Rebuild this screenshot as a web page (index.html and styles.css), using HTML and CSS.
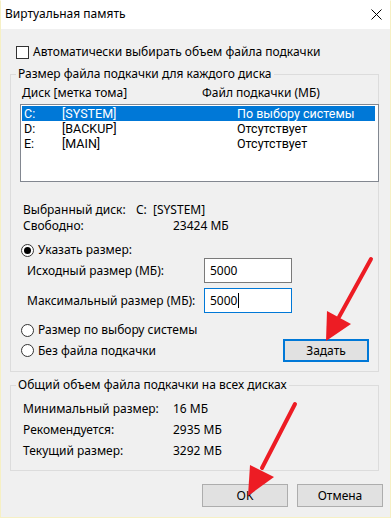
FILE: index.html
```html
<!DOCTYPE html>
<html lang="ru">
<head>
    <meta name="viewport" content="width=device-width, initial-scale=1.0">
    <link rel="stylesheet" href="styles.css">
    <title>Виртуальная память</title>
</head>

<body>
    <div class="window">

        <div class="titlebar">
            <span class="title">Виртуальная память</span>
            <svg class="close" width="11" height="11" viewBox="0 0 11 11">
                <path d="M0.5 0.5 L10.5 10.5 M10.5 0.5 L0.5 10.5" stroke="#000" stroke-width="1" fill="none"/>
            </svg>
        </div>

        <div class="dialog">
            <div class="check"><span class="box"></span>Автоматически выбирать объем файла подкачки</div>

            <fieldset class="group disks">
                <legend>Размер файла подкачки для каждого диска</legend>
                <div class="cols">
                    <span class="col-disk">Диск [метка тома]</span>
                    <span>Файл подкачки (МБ)</span>
                </div>
                <div class="listbox">
                    <div class="row selected"><span class="drv">C:</span><span class="lbl">[SYSTEM]</span><span>По выбору системы</span></div>
                    <div class="row"><span class="drv">D:</span><span class="lbl">[BACKUP]</span><span>Отсутствует</span></div>
                    <div class="row"><span class="drv">E:</span><span class="lbl">[MAIN]</span><span>Отсутствует</span></div>
                </div>

                <div class="info first"><span class="key">Выбранный диск:</span><span>C:&nbsp;&nbsp;[SYSTEM]</span></div>
                <div class="info"><span class="key">Свободно:</span><span class="free">23424 МБ</span></div>

                <div class="radio on custom"><span class="dot"></span>Указать размер:</div>
                <div class="size-row"><span class="size-label">Исходный размер (МБ):</span><div class="field">5000</div></div>
                <div class="size-row second"><span class="size-label">Максимальный размер (МБ):</span><div class="field focused">5000<span class="caret"></span></div></div>
                <div class="radio system"><span class="dot"></span>Размер по выбору системы</div>
                <div class="last-row">
                    <div class="radio"><span class="dot"></span>Без файла подкачки</div>
                    <div class="button default">Задать</div>
                </div>
            </fieldset>

            <fieldset class="group totals">
                <legend>Общий объем файла подкачки на всех дисках</legend>
                <div class="total first"><span class="tkey">Минимальный размер:</span><span>16 МБ</span></div>
                <div class="total"><span class="tkey">Рекомендуется:</span><span>2935 МБ</span></div>
                <div class="total"><span class="tkey">Текущий размер:</span><span>3292 МБ</span></div>
            </fieldset>

            <div class="buttons">
                <div class="button">OK</div>
                <div class="button">Отмена</div>
            </div>
        </div>

        <!-- red pointers drawn over the dialog -->
        <svg class="arrows" width="391" height="518" viewBox="0 0 391 518">
            <g stroke="#ed1c24" stroke-width="4" stroke-linecap="round" fill="none">
                <path d="M371 259 L339 317"/>
                <path d="M295 404 L262 468"/>
            </g>
            <g fill="#ed1c24">
                <polygon points="326,341 327,311 351,324"/>
                <polygon points="248,496 250,465 274,477"/>
            </g>
        </svg>
    </div>
</body>
</html>
```

FILE: styles.css
```css
html, body {
    margin: 0px;
    padding: 0px;
}

body {
    width: 391px;
    height: 518px;
    font-family: "Noto Sans", "Open Sans", sans-serif;
    font-size: 12px;
    line-height: 16px;
    color: #000;
}

.window {
    position: relative;
    box-sizing: border-box;
    width: 391px;
    height: 518px;
    border: 1px solid #f6f0c4;
    border-top-color: #ffffff;
    background-color: #f0f0f0;
}

.titlebar {
    display: flex;
    align-items: center;
    justify-content: space-between;
    height: 28px;
    padding: 0px 8px 0px 4px;
    background-color: #ffffff;
}

.title {
    font-size: 12px;
    margin-top: -2px;
}

.close {
    margin-top: -2px;
}

.dialog {
    display: flex;
    flex-direction: column;
}

/* checkbox */
.check {
    display: flex;
    align-items: center;
    margin: 15px 0px 0px 15px;
    height: 16px;
}

.box {
    box-sizing: border-box;
    width: 13px;
    height: 13px;
    border: 1px solid #333;
    background-color: #fff;
    margin-right: 4px;
}

/* group boxes */
.group {
    box-sizing: border-box;
    width: 369px;
    margin: 6px 0px 0px 9px;
    padding: 0px 0px 9px 5px;
    border: 1px solid #dcdcdc;
    min-inline-size: 0px;
}

.group legend {
    padding: 0px 2px;
    line-height: 16px;
}

.cols {
    display: flex;
    margin: 3px 0px 0px 6px;
}

.col-disk {
    width: 180px;
}

.listbox {
    box-sizing: border-box;
    height: 78px;
    margin: 3px -1px 0px 4px;
    padding: 1px;
    border: 1px solid #828790;
    background-color: #fff;
    font-family: Roboto, "Noto Sans", sans-serif;
    font-size: 12.5px;
}

.row {
    display: flex;
    align-items: center;
    height: 15px;
    line-height: 14px;
    padding-left: 2px;
}

.row.selected {
    background-color: #0078d7;
    color: #fff;
    margin-right: 2px;
}

.drv {
    width: 38px;
}

.lbl {
    width: 175px;
}

.info {
    display: flex;
    margin-left: 7px;
}

.info.first {
    margin-top: 20px;
}

.key {
    width: 113px;
}

.free {
    padding-left: 37px;
}

/* radio buttons */
.radio {
    display: flex;
    align-items: center;
    height: 16px;
    margin-left: 5px;
}

.radio.custom {
    margin-top: 8px;
}

.radio.system {
    margin-top: 9px;
}

.dot {
    box-sizing: border-box;
    width: 13px;
    height: 13px;
    border: 1px solid #333;
    border-radius: 50%;
    background-color: #fff;
    margin-right: 4px;
    display: flex;
    align-items: center;
    justify-content: center;
}

.radio.on .dot::after {
    content: "";
    width: 7px;
    height: 7px;
    border-radius: 50%;
    background-color: #000;
}

/* size fields */
.size-row {
    display: flex;
    align-items: center;
    height: 25px;
}

.size-row.second {
    margin-top: 5px;
}

.size-label {
    width: 177px;
    margin-left: 11px;
}

.field {
    box-sizing: border-box;
    display: flex;
    align-items: center;
    width: 88px;
    height: 25px;
    padding-left: 5px;
    border: 1px solid #7a7a7a;
    background-color: #fff;
}

.field.focused {
    border-color: #0078d7;
}

.caret {
    width: 1px;
    height: 15px;
    margin-left: 1px;
    background-color: #000;
}

.last-row {
    display: flex;
    align-items: center;
    justify-content: space-between;
    margin: 1px 9px 0px 0px;
    height: 23px;
}

/* buttons */
.button {
    box-sizing: border-box;
    width: 86px;
    height: 23px;
    display: flex;
    align-items: center;
    justify-content: center;
    border: 1px solid #adadad;
    background-color: #e1e1e1;
}

.button.default {
    border: 2px solid #0078d7;
}

/* totals group */
.totals {
    margin-top: 5px;
}

.total {
    display: flex;
    height: 21px;
    line-height: 21px;
    margin-left: 7px;
}

.total.first {
    margin-top: 5px;
}

.tkey {
    width: 150px;
}

.buttons {
    display: flex;
    justify-content: flex-end;
    gap: 9px;
    margin: 13px 7px 0px 0px;
}

.arrows {
    position: absolute;
    left: -1px;
    top: -1px;
    pointer-events: none;
}
```
